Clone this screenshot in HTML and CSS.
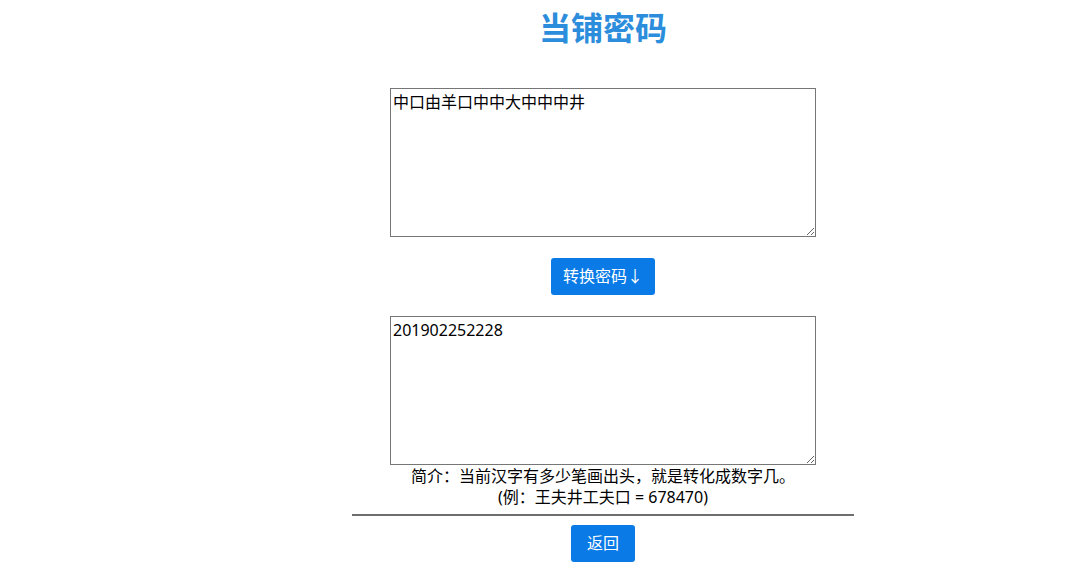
FILE: index.html
```html
<!DOCTYPE html>
<html lang="zh-CN">
<head>
<meta charset="utf-8">
<title>当铺密码</title>
<link rel="stylesheet" href="styles.css">
</head>
<body>
<main class="page">
  <h1 class="title">当铺密码</h1>
  <textarea class="box box-in">中口由羊口中中大中中中井</textarea>
  <button class="btn btn-convert">转换密码↓</button>
  <textarea class="box box-out">201902252228</textarea>
  <p class="intro">简介：当前汉字有多少笔画出头，就是转化成数字几。<br>(例：王夫井工夫口 = 678470)</p>
  <hr class="rule">
  <button class="btn btn-back">返回</button>
</main>
</body>
</html>
```
FILE: styles.css
```css
html, body {
  margin: 0;
  padding: 0;
  background: #ffffff;
}
body {
  padding-left: 134px;
  font-family: "Noto Sans", "Noto Sans CJK SC", sans-serif;
  font-size: 16px;
  color: #000;
}
.page {
  display: flex;
  flex-direction: column;
  align-items: center;
}
.title {
  margin: 5px 0 0;
  font-family: "Noto Sans CJK SC", sans-serif;
  font-size: 32px;
  line-height: 42px;
  font-weight: 700;
  color: #2b8ddb;
}
.box {
  box-sizing: border-box;
  width: 426px;
  height: 149px;
  margin: 0;
  padding: 2px;
  border: 1px solid #767676;
  font-family: "Noto Sans", "Noto Sans CJK SC", sans-serif;
  font-size: 16px;
  line-height: 22px;
  color: #000;
  background: #fff;
}
.box-in {
  margin-top: 41px;
}
.btn {
  box-sizing: border-box;
  height: 37px;
  border: none;
  border-radius: 3px;
  background: #0a7be6;
  color: #fff;
  font-family: "Noto Sans", "Noto Sans CJK SC", sans-serif;
  font-size: 16px;
  line-height: 21px;
  padding: 0;
  white-space: nowrap;
}
.btn-convert {
  width: 104px;
  margin: 21px 0;
}
.btn-back {
  width: 64px;
  margin-top: 9px;
}
.intro {
  margin: 1px 0 0;
  text-align: center;
  line-height: 21px;
}
.rule {
  width: 502px;
  margin: 6px 0 0;
  border: none;
  border-top: 2px solid #6e6e6e;
  height: 0;
}
```
